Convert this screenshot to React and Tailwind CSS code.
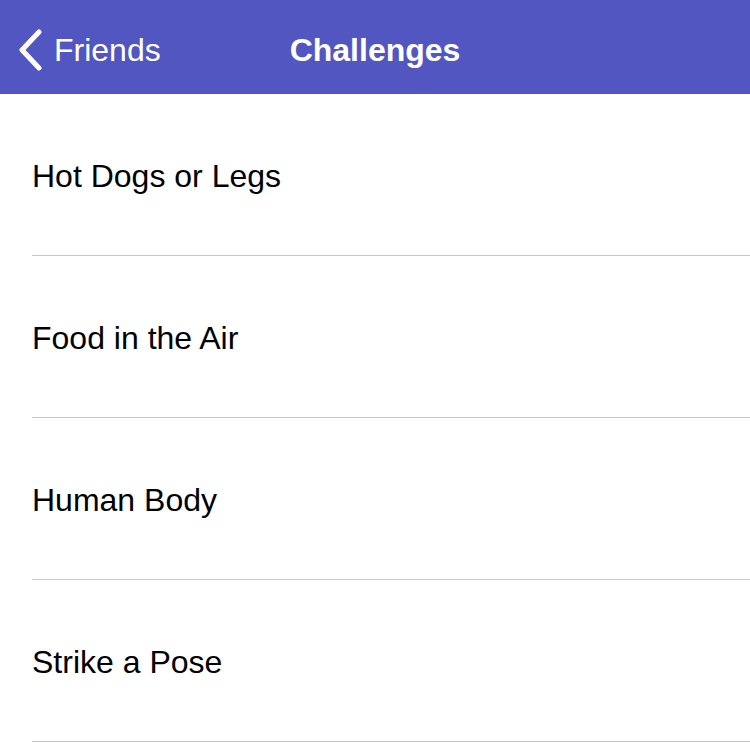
import React from 'react'

const challenges = ['Hot Dogs or Legs', 'Food in the Air', 'Human Body', 'Strike a Pose']

export default function App() {
  return (
    <div className="min-h-screen bg-white" style={{ fontFamily: '"Liberation Sans", Arial, sans-serif' }}>
      {/* nav bar */}
      <div className="relative flex h-[94px] items-center justify-center bg-[#5256c0] pt-[5px] text-white">
        <div className="absolute left-[17px] top-0 flex h-full items-center pt-[5px]">
          <svg width="27" height="42" viewBox="0 0 27 42">
            <path d="M22 3 L5 21 L22 39" fill="none" stroke="white" strokeWidth="5" strokeLinecap="round" strokeLinejoin="round" />
          </svg>
          <span className="ml-[10px] text-[32px]">Friends</span>
        </div>
        <span className="text-[32px] font-bold">Challenges</span>
      </div>

      {/* list */}
      <div>
        {challenges.map((c) => (
          <div key={c} className="pl-[32px]">
            <div className="flex h-[162px] items-center border-b border-[#c8c7cc] text-[32px] text-black">
              <span className="mt-[2px]">{c}</span>
            </div>
          </div>
        ))}
      </div>
    </div>
  )
}
